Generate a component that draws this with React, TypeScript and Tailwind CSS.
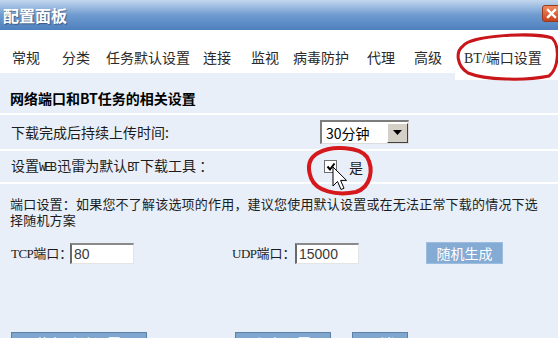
import React from 'react';

const tabs: { label: string; cls: string }[] = [
  { label: '常规', cls: 'ml-[12px]' },
  { label: '分类', cls: 'ml-[22px]' },
  { label: '任务默认设置', cls: 'ml-[16px]' },
  { label: '连接', cls: 'ml-[13px]' },
  { label: '监视', cls: 'ml-[20px]' },
  { label: '病毒防护', cls: 'ml-[14px]' },
  { label: '代理', cls: 'ml-[18px]' },
  { label: '高级', cls: 'ml-[19px]' },
];

function Divider() {
  return <div className="h-[2px] bg-white" />;
}

function Lat({ children }: { children: React.ReactNode }) {
  return (
    <span className="font-[family-name:'Liberation_Mono',monospace] text-[12px] tracking-[-1.8px] pr-[2px]">{children}</span>
  );
}

function Ser({ children }: { children: React.ReactNode }) {
  return <span className="font-[family-name:'Liberation_Serif',serif] text-[13px] tracking-[-0.5px]">{children}</span>;
}

function InsetInput({ value, w }: { value: string; w: string }) {
  return (
    <div
      className={`${w} h-[21px] shrink-0 bg-white border-t-2 border-l-2 border-t-[#8a8a8a] border-l-[#6a6a6a] border-b border-r border-b-[#e4e4e4] border-r-[#e4e4e4] flex items-center pl-[2px] text-[14px] leading-[16px] text-[#3a3a3a] font-[family-name:'Liberation_Sans',sans-serif]`}
    >
      {value}
    </div>
  );
}

export default function App() {
  return (
    <div className="relative w-[558px] h-[338px] overflow-hidden bg-white font-[family-name:'Noto_Sans_CJK_SC','Noto_Sans',sans-serif] text-[#1c1c1c]">
      {/* Title bar */}
      <div className="h-[30px] flex items-center justify-between bg-gradient-to-b from-[#c3d7ee] via-[#6f9bd0] to-[#4e80bd]">
        <div className="pl-[3px] text-[16px] leading-[20px] font-bold text-white [text-shadow:1px_1px_1px_rgba(0,0,0,0.35)]">
          配置面板
        </div>
        <div className="mr-[-3px] mb-[4px] w-[19px] h-[17px] rounded-[3px] bg-gradient-to-b from-[#f08a5e] to-[#c8401c] border border-[#9a3a1a] flex items-center justify-center">
          <svg width="11" height="11" viewBox="0 0 11 11">
            <path d="M2 2 L9 9 M9 2 L2 9" stroke="white" strokeWidth="2.4" strokeLinecap="square" />
          </svg>
        </div>
      </div>

      {/* Tabs */}
      <div className="h-[43px] bg-white flex pt-[17px] text-[14px] leading-[20px] text-[#2a2a2a]">
        {tabs.map((t) => (
          <span key={t.label} className={`${t.cls} whitespace-nowrap`}>
            {t.label}
          </span>
        ))}
        <span className="ml-[22px] whitespace-nowrap">
          <span className="font-[family-name:'Liberation_Serif',serif] text-[14px]">BT/</span>端口设置
        </span>
      </div>

      {/* Panel */}
      <div className="bg-[#e8eff8] h-[265px]">
        <div className="flex h-[7px]">
          <div className="flex-1" />
          <div className="w-[103px] bg-white" />
        </div>
        <div className="h-[33px] pt-[8px] pl-[10px] text-[14px] leading-[20px] font-bold text-black">
          网络端口和BT任务的相关设置
        </div>
        <Divider />
        <div className="h-[34px] flex items-center text-[14px] leading-[20px]">
          <div className="w-[320px] shrink-0 pl-[11px]">下载完成后持续上传时间:</div>
          <div className="w-[89px] h-[24px] bg-white border-t-2 border-l-2 border-t-[#7c7c7c] border-l-[#7c7c7c] border-b border-r border-b-[#dcdcdc] border-r-[#dcdcdc] flex items-center">
            <span className="flex-1 pl-[4px] text-[14px] leading-[18px] text-black">30分钟</span>
            <div className="w-[21px] h-[20px] bg-[#d4d0c8] border border-t-white border-l-white border-b-[#404040] border-r-[#404040] flex items-center justify-center">
              <svg width="9" height="5" viewBox="0 0 9 5">
                <path d="M0 0 H9 L4.5 5 Z" fill="#000" />
              </svg>
            </div>
          </div>
        </div>
        <Divider />
        <div className="h-[31px] flex items-center text-[14px] leading-[20px]">
          <div className="w-[324px] shrink-0 pl-[11px] whitespace-nowrap">
            设置<Lat>WEB</Lat>迅雷为默认<Lat>BT</Lat>下载工具 ：
          </div>
          <div className="w-[13px] h-[13px] bg-white border border-[#707070] flex items-center justify-center">
            <svg width="10" height="10" viewBox="0 0 10 10">
              <path d="M1.5 4.5 L4 7.5 L8.5 1.5" stroke="#000" strokeWidth="2" fill="none" />
            </svg>
          </div>
          <span className="ml-[12px]">是</span>
        </div>
        <Divider />
        <div className="pt-[12px] pl-[10px] text-[13px] leading-[16px] tracking-[0.2px] whitespace-nowrap">
          <div>端口设置：如果您不了解该选项的作用，建议您使用默认设置或在无法正常下载的情况下选</div>
          <div>择随机方案</div>
        </div>
        <div className="mt-[14px] h-[22px] flex items-center text-[13px] leading-[20px]">
          <div className="w-[70px] shrink-0 pl-[11px] whitespace-nowrap">
            <Ser>TCP</Ser>端口：
          </div>
          <InsetInput value="80" w="w-[64px]" />
          <div className="w-[98px] shrink-0" />
          <div className="w-[63px] shrink-0 whitespace-nowrap">
            <Ser>UDP</Ser>端口：
          </div>
          <InsetInput value="15000" w="w-[64px]" />
          <div className="w-[67px] shrink-0" />
          <div className="w-[77px] h-[22px] bg-[#84abd4] border border-[#9dbde0] flex items-center justify-center text-white text-[14px] leading-[18px]">
            随机生成
          </div>
        </div>
        <div className="mt-[68px] flex text-[14px] leading-[14px] text-white">
          <div className="ml-[11px] w-[136px] h-[24px] bg-[#7ea6cf] border border-[#5f80a6] flex items-start justify-center pt-[3px]">
            恢复默认设置
          </div>
          <div className="ml-[88px] w-[96px] h-[24px] bg-[#7ea6cf] border border-[#5f80a6] flex items-start justify-center pt-[3px]">
            保存设置
          </div>
          <div className="ml-[21px] w-[56px] h-[24px] bg-[#7ea6cf] border border-[#5f80a6] flex items-start justify-center pt-[3px]">
            取消
          </div>
        </div>
      </div>

      {/* Annotation overlay: red hand-drawn circles and mouse cursor */}
      <svg className="absolute left-0 top-0 pointer-events-none" width="558" height="338" viewBox="0 0 558 338">
        <path
          d="M463 46 C470 35, 535 32, 552 38 C560 46, 559 68, 549 76 C525 81, 485 80, 468 73 C457 66, 455 52, 463 46 Z"
          fill="none"
          stroke="#c8161a"
          strokeWidth="3"
        />
        <path
          d="M318 153 C332 145, 360 147, 367 157 C374 169, 371 187, 356 192 C336 196, 316 191, 311 178 C307 167, 309 158, 318 153 Z"
          fill="none"
          stroke="#d4181c"
          strokeWidth="4"
        />
        <path
          d="M333 167 L333 186 L337.5 181.5 L341 189.5 L344 188.2 L340.6 180.4 L346.5 180.4 Z"
          fill="#fff"
          stroke="#000"
          strokeWidth="1"
          strokeLinejoin="miter"
        />
      </svg>
    </div>
  );
}
